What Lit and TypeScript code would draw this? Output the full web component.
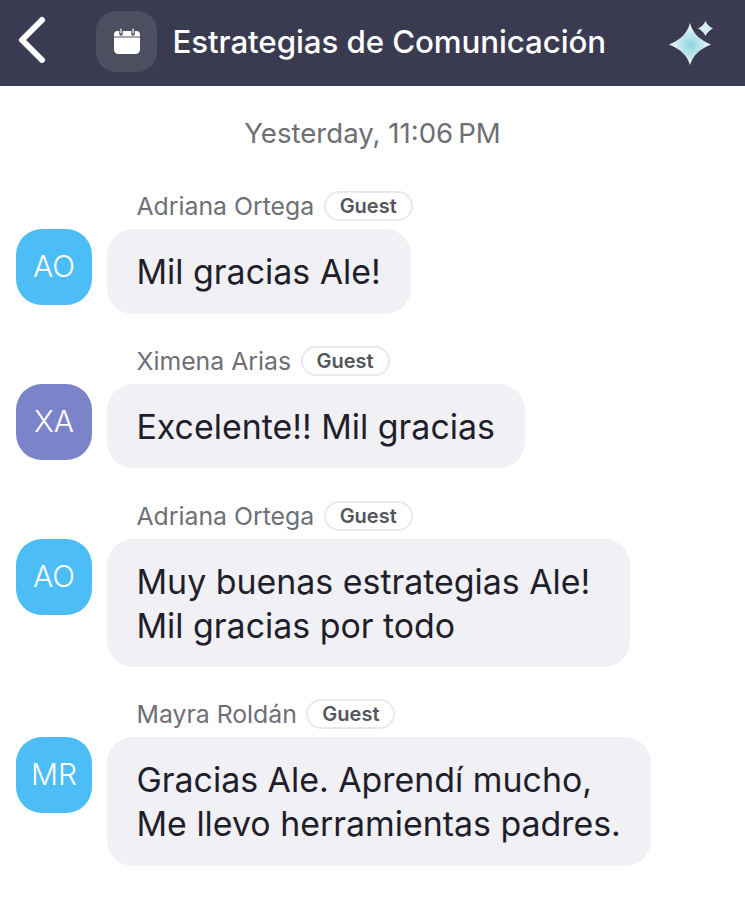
import { LitElement, html, css, svg } from "lit";
import { customElement } from "lit/decorators.js";
import { classMap } from "lit/directives/class-map.js";

type Msg = { name: string; initials: string; color: string; lines: string[]; wide?: boolean };

const MSGS: Msg[] = [
  { name: "Adriana Ortega", initials: "AO", color: "#4cbdf7", lines: ["Mil gracias Ale!"] },
  { name: "Ximena Arias", initials: "XA", color: "#7b83c9", lines: ["Excelente!! Mil gracias"] },
  { name: "Adriana Ortega", initials: "AO", color: "#4cbdf7", lines: ["Muy buenas estrategias Ale!", "Mil gracias por todo"], wide: true },
  { name: "Mayra Roldán", initials: "MR", color: "#4cbdf7", lines: ["Gracias Ale. Aprendí mucho,", "Me llevo herramientas padres."] },
];

@customElement("app-root")
export class AppRoot extends LitElement {
  static styles = css`
    :host {
      display: block;
      width: 745px;
      height: 900px;
      overflow: hidden;
      background: #fff;
      font-family: Inter, "Liberation Sans", sans-serif;
    }
    .bar {
      height: 86px;
      box-sizing: border-box;
      background: #3a3a50;
      display: flex;
      align-items: center;
      padding: 0 25px 3px 17px;
      color: #fff;
    }
    .back { width: 30px; height: 50px; display: block; margin-top: -3px; }
    .cal {
      width: 61px;
      height: 61px;
      margin-left: 49px;
      border-radius: 20px;
      background: #4e4e61;
      display: flex;
      align-items: center;
      justify-content: center;
      flex: none;
    }
    .title {
      font-size: 31.3px;
      font-weight: 500;
      letter-spacing: -0.1px;
      margin-left: 15.5px;
      flex: 1;
      white-space: nowrap;
    }
    .spark { width: 52px; height: 52px; display: block; margin-top: 5px; }
    .time {
      height: 30px;
      margin-top: 32px;
      text-align: center;
      font-size: 27.6px;
      line-height: 30px;
      color: #6e6e74;
    }
    .list { display: flex; flex-direction: column; margin-top: 43px; padding-left: 16px; gap: 32.25px; }
    .msg { display: flex; flex-direction: column; }
    .head {
      height: 30px;
      margin-left: 120.5px;
      margin-bottom: 8px;
      display: flex;
      align-items: center;
      gap: 9.5px;
    }
    .name { font-size: 24.8px; color: #6f6f76; white-space: nowrap; }
    .guest {
      height: 30px;
      box-sizing: border-box;
      padding: 0 14px;
      border: 2px solid #e9e9ee;
      border-radius: 15px;
      font-size: 20px;
      font-weight: 600;
      color: #55555d;
      display: flex;
      align-items: center;
    }
    .body { display: flex; align-items: flex-start; gap: 15px; }
    .avatar {
      width: 76px;
      height: 76px;
      border-radius: 26px;
      color: #fff;
      font-size: 30px;
      font-weight: 300;
      padding-bottom: 2px;
      box-sizing: border-box;
      display: flex;
      align-items: center;
      justify-content: center;
      flex: none;
    }
    .bubble {
      background: #f0f0f5;
      border-radius: 26px;
      padding: 21px 30px 19.5px 29.5px;
      font-size: 33.9px;
      line-height: 44px;
      color: #1f1f2b;
      white-space: nowrap;
    }
    .bubble.wide { padding-right: 40px; }
    .bubble div { display: block; }
  `;

  private backIcon() {
    return svg`<svg class="back" viewBox="0 0 30 50" fill="none" stroke="#fff" stroke-width="6" stroke-linecap="round" stroke-linejoin="round"><path d="M25 5 L5 25 L25 45"/></svg>`;
  }

  private calIcon() {
    return svg`<svg width="28" height="28" viewBox="0 0 28 28"><path fill="#fff" d="M4.5 3H23.5A3.5 3.5 0 0 1 27 6.5V21.5A4.5 4.5 0 0 1 22.5 26H5.500A4.500 4.500 0 0 1 1 21.500V6.500A3.500 3.500 0 0 1 4.500 3Z"/><path d="M1 9H27" stroke="#4e4e61" stroke-width="1"/><path d="M8 1V6M20 1V6" stroke="#4e4e61" stroke-width="3.500" stroke-linecap="round"/><path d="M8 1V5M20 1V5" stroke="#fff" stroke-width="1.200" stroke-linecap="round"/></svg>`;
  }

  private sparkIcon() {
    return svg`<svg class="spark" viewBox="0 0 52 52">
      <defs>
        <radialGradient id="sg" cx="0.52" cy="0.52" r="0.5">
          <stop offset="0" stop-color="#8fd6e0"/>
          <stop offset="0.5" stop-color="#bfe6ec"/>
          <stop offset="1" stop-color="#f7fcfd"/>
        </radialGradient>
      </defs>
      <path fill="url(#sg)" d="M22 5 C25 16 32 22 43 26.500 C32 31 25 37 22 47 C19 37 12 31 1 26.500 C12 22 19 16 22 5Z"/>
      <path fill="#d5eef3" d="M37.500 3 C39 6 41 8.500 45 10.500 C41 12.500 39 15 37.500 18 C36 15 34 12.500 30 10.500 C34 8.500 36 6 37.500 3Z"/>
    </svg>`;
  }

  render() {
    return html`
      <div class="bar">
        ${this.backIcon()}
        <div class="cal">${this.calIcon()}</div>
        <div class="title">Estrategias de Comunicación</div>
        ${this.sparkIcon()}
      </div>
      <div class="time">Yesterday, 11:06\u202FPM</div>
      <div class="list">
        ${MSGS.map(
          (m) => html`
            <div class="msg">
              <div class="head">
                <span class="name">${m.name}</span>
                <span class="guest">Guest</span>
              </div>
              <div class="body">
                <div class="avatar" style="background:${m.color}">${m.initials}</div>
                <div class=${classMap({ bubble: true, wide: !!m.wide })}>${m.lines.map((l) => html`<div>${l}</div>`)}</div>
              </div>
            </div>
          `
        )}
      </div>
    `;
  }
}
